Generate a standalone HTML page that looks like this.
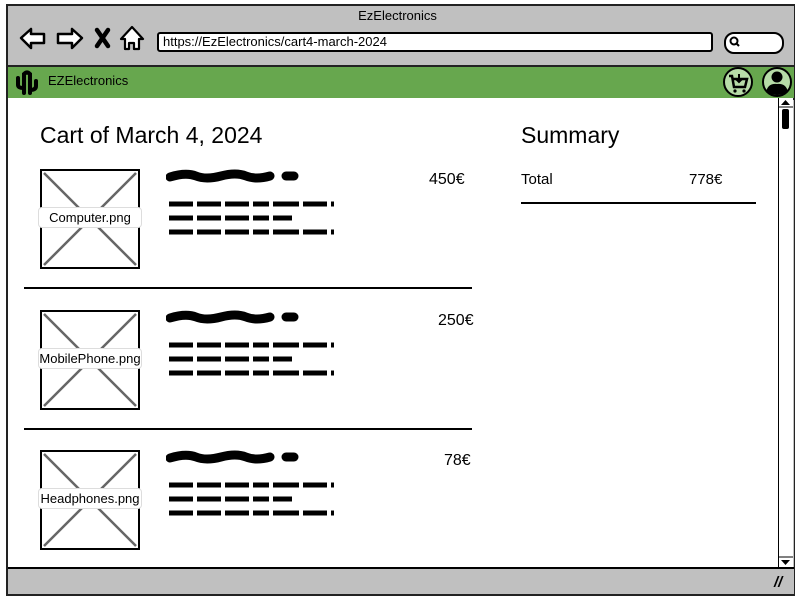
<!DOCTYPE html>
<html><head><meta charset="utf-8"><style>
body{margin:0;width:795px;height:596px;background:#fff;position:relative;overflow:hidden;font-family:"Liberation Sans",sans-serif}
.a{position:absolute}
.img{position:absolute;width:96px;height:96px;border:2px solid #000;background:#fff}
.lbl{position:absolute;left:-4px;right:-4px;top:36px;text-align:center;font-size:13px;background:#fff;border:1px solid #ddd;border-radius:4px;padding:2px 0}
.price{position:absolute;font-size:16px}
.hr{position:absolute;left:24px;width:448px;height:2px;background:#000}
</style></head><body>
<div class="a" style="left:6px;top:4px;width:786px;height:588px;border:2px solid #222;background:#c0c0c0"></div>
<div class="a" style="left:0;top:8px;width:795px;text-align:center;font-size:13px">EzElectronics</div>
<svg class="a" style="left:18px;top:24px" width="130" height="30" viewBox="0 0 130 30">
<path d="M3 14 L13 5 L13 10 L26 10 L26 19 L13 19 L13 24 Z" fill="#fff" stroke="#000" stroke-width="2.5" stroke-linejoin="round"/>
<path d="M64 14 L54 5 L54 10 L40 10 L40 19 L54 19 L54 24 Z" fill="#fff" stroke="#000" stroke-width="2.5" stroke-linejoin="round"/>
<path d="M79 6 L90 22 M90 6 L79 22" stroke="#000" stroke-width="4.5" stroke-linecap="round"/>
<path d="M103 15 L114 3 L125 15 L121 15 L121 25 L116 25 L116 19 L111 19 L111 25 L107 25 L107 15 Z" fill="#fff" stroke="#000" stroke-width="2.2" stroke-linejoin="round"/>
</svg>
<div class="a" style="left:157px;top:32px;width:548px;height:16px;border:2px solid #000;border-radius:3px;background:#fff;font-size:13px;line-height:16px;padding-left:4px">https://EzElectronics/cart4-march-2024</div>
<div class="a" style="left:724px;top:32px;width:56px;height:18px;border:2px solid #000;border-radius:10px;background:#fff"></div>
<svg class="a" style="left:728px;top:35px" width="14" height="14"><circle cx="6" cy="6" r="3.5" fill="none" stroke="#000" stroke-width="2"/><path d="M8.5 8.5 L11 11" stroke="#000" stroke-width="2"/></svg>
<div class="a" style="left:8px;top:65px;width:786px;height:31px;background:#67a74e;border-top:2px solid #222;border-bottom:2px solid #222"></div>
<svg class="a" style="left:14px;top:70px" width="26" height="26"><path d="M10 23 L10 4 Q13 1 16 4 L16 23 M4 8 L4 15 Q4 18 10 18 M22 11 L22 16 Q22 20 16 20" fill="none" stroke="#000" stroke-width="4" stroke-linecap="round"/></svg>
<div class="a" style="left:48px;top:73px;font-size:13px">EZElectronics</div>
<svg class="a" style="left:722px;top:66px" width="72" height="32">
<circle cx="16" cy="16" r="14" fill="#b7dca8" stroke="#000" stroke-width="2"/>
<path d="M7 10 L10 10 L12 21 L23 21 L25 13 L11 13" fill="none" stroke="#000" stroke-width="2.5"/><circle cx="13" cy="25" r="1.6"/><circle cx="22" cy="25" r="1.6"/><path d="M17 8 L17 16 M14 13 L17 16 L20 13" stroke="#000" stroke-width="2" fill="none"/>
<circle cx="55" cy="16" r="14" fill="#b7dca8" stroke="#000" stroke-width="2"/>
<circle cx="55" cy="11" r="5.5"/><path d="M44 26 Q46 17 55 18 Q64 17 66 26 Q55 32 44 26Z"/>
</svg>
<div class="a" style="left:8px;top:98px;width:770px;height:469px;background:#fff"></div>
<div class="a" style="left:778px;top:98px;width:14px;height:469px;background:#fff;border-left:1px solid #000"></div>
<svg class="a" style="left:778px;top:98px" width="15" height="470"><path d="M3 7 L7.5 2 L12 7Z"/><line x1="1" y1="9" x2="15" y2="9" stroke="#000"/><rect x="4" y="11" width="7" height="20" rx="2"/><line x1="1" y1="459" x2="15" y2="459" stroke="#000"/><path d="M3 462 L7.5 467 L12 462Z"/></svg>
<div class="a" style="left:8px;top:567px;width:786px;height:2px;background:#000"></div>
<div class="a" style="left:774px;top:574px;font-size:15px;font-weight:bold;font-style:italic">//</div>
<div class="a" style="left:40px;top:122px;font-size:23px">Cart of March 4, 2024</div>
<div class="a" style="left:521px;top:122px;font-size:23px">Summary</div>
<div class="a" style="left:521px;top:171px;font-size:15px">Total</div>
<div class="a" style="left:689px;top:171px;font-size:15px">778€</div>
<div class="a" style="left:521px;top:202px;width:235px;height:2px;background:#000"></div>

<div class="img" style="left:40px;top:169px"><svg width="96" height="96" style="position:absolute"><path d="M2 2L94 94M94 2L2 94" stroke="#666" stroke-width="2.5"/></svg><div class="lbl">Computer.png</div></div>
<div class="img" style="left:40px;top:310px"><svg width="96" height="96" style="position:absolute"><path d="M2 2L94 94M94 2L2 94" stroke="#666" stroke-width="2.5"/></svg><div class="lbl">MobilePhone.png</div></div>
<div class="img" style="left:40px;top:450px"><svg width="96" height="96" style="position:absolute"><path d="M2 2L94 94M94 2L2 94" stroke="#666" stroke-width="2.5"/></svg><div class="lbl">Headphones.png</div></div>

<svg class="a" style="left:166px;top:166px" width="180" height="380">
<defs><g id="s">
<path d="M4 11 Q20 6 30 10 T55 10 T80 10 T104 10" stroke="#000" stroke-width="9" fill="none" stroke-linecap="round"/>
<path d="M120 10 L128 10" stroke="#000" stroke-width="9" stroke-linecap="round"/>
<path d="M3 38 L168 38 M3 52 L126 52 M3 66 L168 66" stroke="#000" stroke-width="5" stroke-dasharray="24 4 24 4 24 4 16 4 26 4" fill="none"/>
</g></defs>
<use href="#s" y="0"/><use href="#s" y="141"/><use href="#s" y="281"/>
</svg>
<div class="price" style="left:429px;top:171px">450€</div>
<div class="price" style="left:438px;top:312px">250€</div>
<div class="price" style="left:444px;top:452px">78€</div>
<div class="hr" style="top:287px"></div>
<div class="hr" style="top:428px"></div>
</body></html>
